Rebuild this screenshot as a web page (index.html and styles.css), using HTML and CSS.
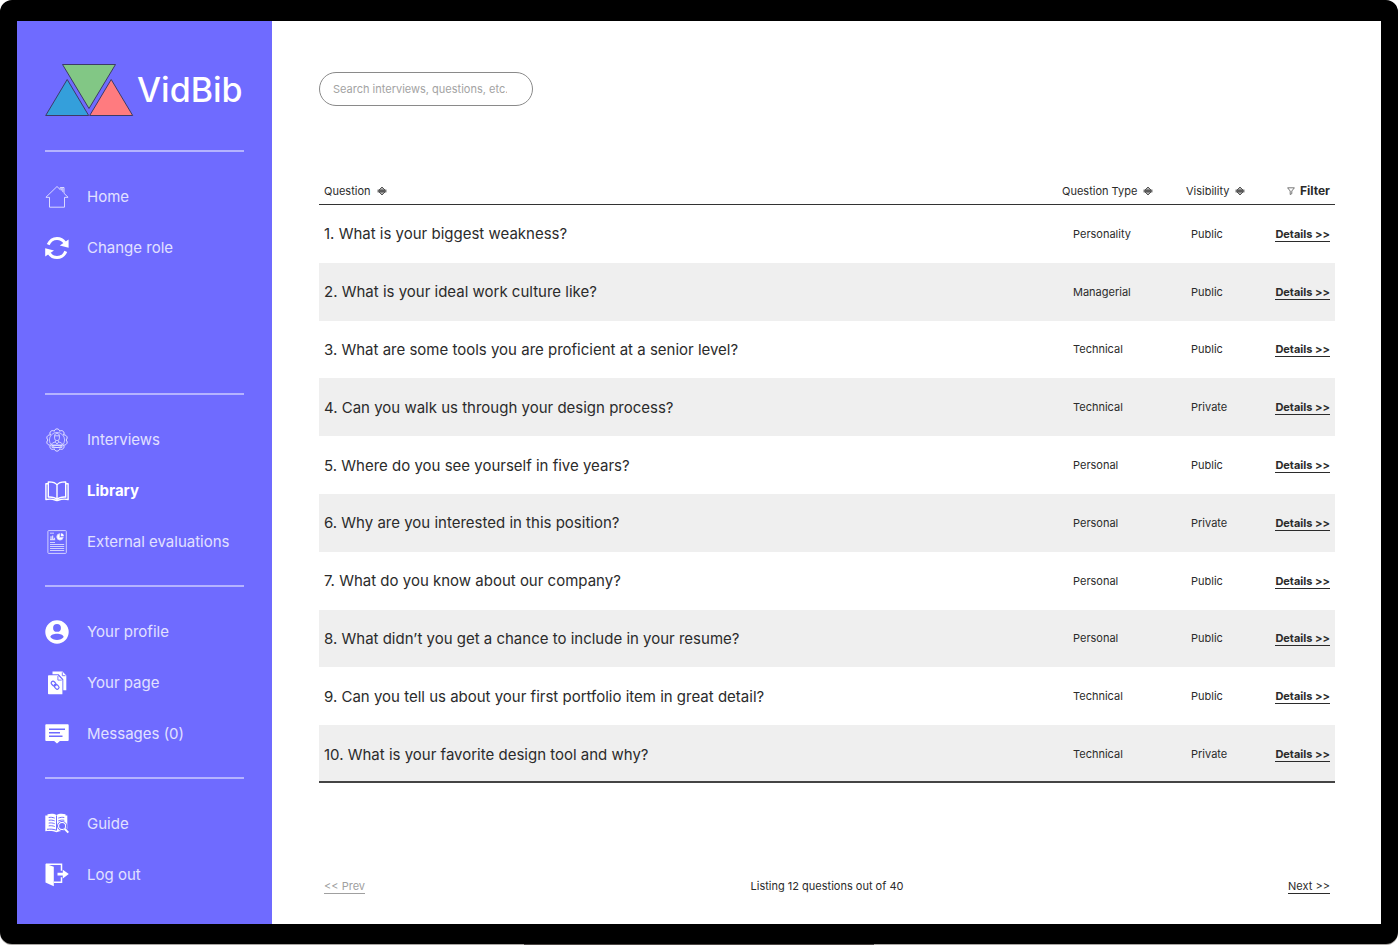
FILE: index.html
```html
<!DOCTYPE html>
<html lang="en">
<head>
<meta charset="utf-8">
<meta name="viewport" content="width=device-width, initial-scale=1">
<title>VidBib – Library</title>
<link rel="stylesheet" href="styles.css">
</head>
<body>
<svg class="sprite" aria-hidden="true">
  <symbol id="sort" viewBox="0 0 10 10"><path d="M5 1 8.300 4.300H1.700zM5 9 1.700 5.700h6.600z" fill="#b5b5b5" stroke="#4a4a4a" stroke-width=".9" stroke-linejoin="round"/><path d="M.8 4.200h8.400M.8 5.800h8.400" stroke="#4a4a4a" stroke-width=".9" stroke-linecap="round"/></symbol>
</svg>
<div class="device">
  <div class="screen">
    <aside class="sidebar">
      <a class="brand" href="#">
        <svg class="brand-mark" viewBox="1 0 90 54" aria-hidden="true">
          <g stroke="#3d3b66" stroke-width="1" stroke-linejoin="miter">
            <path d="M18.500 1.500h53L45 45.500z" fill="#82c785"/>
            <path d="M1.700 52.500 23.200 16.500l21.500 36z" fill="#349fdb"/>
            <path d="M45.700 52.500 67.200 16.500l21.500 36z" fill="#ff7b7f"/>
          </g>
        </svg>
        <span>VidBib</span>
      </a>
      <nav class="menu" aria-label="Main">
        <ul class="group group-first">
          <li><a href="#"><svg class="icon" viewBox="0 0 24 24" fill="none" stroke="#e6e5ff" stroke-width=".9"><path d="M.9 12.300 12 1.500l3.200 3.100V2.500H19v5.800l4.100 4-3.600.1v9.800H4.500v-9.800zM16.300 5.600V3.700h1.500v3.400"/></svg>Home</a></li>
          <li><a href="#"><svg class="icon" viewBox="0 0 24 24"><g fill="none" stroke="#fff" stroke-width="3"><path d="M3.200 8.700C5 4.500 8.300 2.400 12 2.400c3.300 0 6.200 1.700 7.800 4.200"/><path d="M20.800 15.300c-1.800 4.200-5.100 6.300-8.800 6.300-3.300 0-6.200-1.700-7.800-4.200"/></g><path d="M23.600 3.500v8.200L14.800 9.500zM.2 20.500v-8.200l8.800 2.200z" fill="#fff"/></svg>Change role</a></li>
        </ul>
        <ul class="group">
          <li><a href="#"><svg class="icon" viewBox="0 0 24 24" fill="none" stroke="#e9e8ff" stroke-width="1"><path d="M9.300 3.200C9.800.1 14.200.1 14.700 3.200 17.300 1.300 20.400 4.400 18.500 7 21.300 6.500 23.600 9.500 21 12c2.600 2.500.3 5.500-2.500 5 1.900 2.600-1.200 5.700-3.800 3.800-.5 3.100-4.900 3.100-5.400 0C6.700 22.700 3.600 19.600 5.500 17 2.700 17.500.4 14.500 3 12 .4 9.500 2.700 6.500 5.500 7 3.600 4.400 6.700 1.300 9.300 3.200z"/><circle cx="12" cy="12" r="7.600" stroke-width=".7"/><path d="M9.600 7.800c0-3.200 4.800-3.200 4.800 0v2.400c0 3.200-4.800 3.200-4.800 0zM9.600 7.800h4.800M10.500 12.500v1.300l-3 1.200c-.7.300-.8 1-.8 2h10.600c0-1-.1-1.700-.8-2l-3-1.200v-1.300M10.300 14l1.700 2 1.700-2M7 17.500h10v2H7z" stroke-width=".8"/></svg>Interviews</a></li>
          <li><a class="current" href="#" aria-current="page"><svg class="icon" viewBox="0 0 24 24" fill="none" stroke="#fff" stroke-width="1.400" stroke-linejoin="round"><path d="M12 6C10.500 3.600 7.300 2.800 3.300 2.900v15.200c4-.2 7 .7 8.700 2.500 1.700-1.800 4.700-2.700 8.700-2.500V2.900C16.700 2.800 13.500 3.600 12 6zM12 6v14.500M3.200 4.800H.9v15.700c3.600-.7 6.800-.4 9.300.5.400.8 3.200.8 3.600 0 2.500-.9 5.700-1.200 9.300-.5V4.800h-2.300"/></svg>Library</a></li>
          <li><a href="#"><svg class="icon" viewBox="0 0 24 24" fill="none" stroke="#dddcff" stroke-width=".9"><rect x="2.900" y=".6" width="18.400" height="22.800" rx=".8"/><path d="M5 3.200h4M5 12.500h5M5 14.500h14.200M5 16.500h14.200M5 18.500h14.200M5 20.500h14.200"/><path d="M6 9.700V6.300M7.600 9.700V5.500M9.400 9.700V7.800M5 9.700h5.200" stroke-width="1.300"/><path d="M14.500 3.700a3.200 3.200 0 1 0 3.700 3.700h-3.700z" fill="#fff"/><path d="M15.800 3.300v3h3.100a3.200 3.200 0 0 0-3.100-3z" fill="#fff" stroke="none"/></svg>External evaluations</a></li>
        </ul>
        <ul class="group">
          <li><a href="#"><svg class="icon" viewBox="0 0 24 24"><path fill="#fff" fill-rule="evenodd" d="M12 .3a11.700 11.700 0 1 0 0 23.400A11.700 11.700 0 0 0 12 .3zM12 4a3.900 3.900 0 1 1 0 7.800A3.900 3.900 0 0 1 12 4zM5.300 17c.9-4.200 12.500-4.200 13.400 0-2.800 4-10.600 4-13.400 0z"/></svg>Your profile</a></li>
          <li><a href="#"><svg class="icon" viewBox="0 0 24 24"><path fill="#fff" d="M7.500.5h10l3.800 3.900v14.800h-3V8.300l-4.600-5.100H7.500z"/><path fill="#fff" d="M3.800 4.200h9l4.600 4.900v14.200H3.800c-.5 0-.8-.3-.8-.8V5c0-.5.300-.8.800-.8z"/><path d="M17.300 1.300v3.400h3.200M12.900 5v4.100h3.800" fill="none" stroke="#6f6bff" stroke-width=".9"/><g fill="none" stroke="#6f6bff" stroke-width="1.200"><rect x="6" y="10.700" width="5" height="3.600" rx="1.800" transform="rotate(45 8.500 12.500)"/><rect x="9.200" y="14.100" width="5" height="3.600" rx="1.800" transform="rotate(45 11.700 15.900)"/><path d="m9.200 13.200 2 2"/></g></svg>Your page</a></li>
          <li><a href="#"><svg class="icon" viewBox="0 0 24 24"><path fill="#fff" d="M1.500 2.300h21c.8 0 1.200.4 1.200 1.200v14.300c0 .8-.4 1.200-1.200 1.200h-7.600L12 21.500 9.100 19H1.500c-.8 0-1.200-.4-1.200-1.200V3.500c0-.8.400-1.200 1.200-1.200z"/><path d="M4 7.200h16M4 10.700h11M4 14.200h13.500" stroke="#6f6bff" stroke-width="1.400"/></svg>Messages (0)</a></li>
        </ul>
        <ul class="group">
          <li><a href="#"><svg class="icon" viewBox="0 0 24 24"><path fill="#fff" d="M2.500 2.200C6 1.300 9.500 1.600 11.500 3c2-1.400 5.500-1.700 9-.8v1.300h1.800v15.800c-4-.6-8-.3-10.800 1C8.700 19 4.500 18.700.3 19.300V3.500h2.200z"/><g fill="none" stroke="#6f6bff" stroke-width="1"><path d="M11.500 3.500v15M3.700 5.500c2-.4 4-.2 6 .6M3.700 8.300c2-.4 4-.2 6 .6M3.700 11.100c2-.4 4-.2 6 .6M3.700 13.900c2-.4 4-.2 6 .6M2 17.300c3.500-.4 6.500-.2 9 .8M13.300 6.100c2-.8 4-1 6-.6M13.300 8.900c2-.8 4-1 6-.6"/></g><circle cx="17.100" cy="14" r="4.600" fill="#fff" stroke="#6f6bff" stroke-width="1"/><circle cx="17.100" cy="14" r="3" fill="#6f6bff"/><path d="m19.700 16.700 3.800 4" stroke="#6f6bff" stroke-width="3.600"/><path d="m19.700 16.700 3.600 3.900" stroke="#fff" stroke-width="2"/></svg>Guide</a></li>
          <li><a href="#"><svg class="icon" viewBox="0 0 24 24"><path fill="#fff" d="m.5.800 8.300 3v19.400L.5 19.600z"/><path d="M1 1.300h15.500v6.400M16.500 14.300v5H9" fill="none" stroke="#fff" stroke-width="1.500"/><path d="M12.500 9.700h5.300V6.800l6 4.300-6 4.300v-2.900h-5.300z" fill="#fff"/></svg>Log out</a></li>
        </ul>
      </nav>
    </aside>
    <main class="content">
      <form class="search" role="search">
        <input class="search-box" type="search" aria-label="Search" placeholder="Search interviews, questions, etc.">
      </form>
      <div class="listing">
        <table class="questions">
          <thead>
            <tr>
              <th class="col-question" scope="col"><button type="button">Question <svg class="sort"><use href="#sort"/></svg></button></th>
              <th class="col-type" scope="col"><button type="button">Question Type <svg class="sort"><use href="#sort"/></svg></button></th>
              <th class="col-visibility" scope="col"><button type="button">Visibility <svg class="sort"><use href="#sort"/></svg></button></th>
              <th class="col-action" scope="col"><button class="filter" type="button"><svg class="funnel" viewBox="0 0 8 8" fill="none" stroke="#555" stroke-width=".8"><path d="M.6.800h6.800L4.800 4v2.700l-1.600.8V4z"/></svg> Filter</button></th>
            </tr>
          </thead>
          <tbody>
            <tr><td>1. What is your biggest weakness?</td><td class="type">Personality</td><td class="vis">Public</td><td class="act"><a href="#">Details &gt;&gt;</a></td></tr>
            <tr><td>2. What is your ideal work culture like?</td><td class="type">Managerial</td><td class="vis">Public</td><td class="act"><a href="#">Details &gt;&gt;</a></td></tr>
            <tr><td>3. What are some tools you are proficient at a senior level?</td><td class="type">Technical</td><td class="vis">Public</td><td class="act"><a href="#">Details &gt;&gt;</a></td></tr>
            <tr><td>4. Can you walk us through your design process?</td><td class="type">Technical</td><td class="vis">Private</td><td class="act"><a href="#">Details &gt;&gt;</a></td></tr>
            <tr><td>5. Where do you see yourself in five years?</td><td class="type">Personal</td><td class="vis">Public</td><td class="act"><a href="#">Details &gt;&gt;</a></td></tr>
            <tr><td>6. Why are you interested in this position?</td><td class="type">Personal</td><td class="vis">Private</td><td class="act"><a href="#">Details &gt;&gt;</a></td></tr>
            <tr><td>7. What do you know about our company?</td><td class="type">Personal</td><td class="vis">Public</td><td class="act"><a href="#">Details &gt;&gt;</a></td></tr>
            <tr><td>8. What didn’t you get a chance to include in your resume?</td><td class="type">Personal</td><td class="vis">Public</td><td class="act"><a href="#">Details &gt;&gt;</a></td></tr>
            <tr><td>9. Can you tell us about your first portfolio item in great detail?</td><td class="type">Technical</td><td class="vis">Public</td><td class="act"><a href="#">Details &gt;&gt;</a></td></tr>
            <tr><td>10. What is your favorite design tool and why?</td><td class="type">Technical</td><td class="vis">Private</td><td class="act"><a href="#">Details &gt;&gt;</a></td></tr>
          </tbody>
        </table>
      </div>
      <nav class="pager" aria-label="Pages">
        <a class="prev" href="#">&lt;&lt; Prev</a>
        <span>Listing 12 questions out of 40</span>
        <a class="next" href="#">Next &gt;&gt;</a>
      </nav>
    </main>
  </div>
  <div class="lip"></div>
</div>
</body>
</html>
```
FILE: styles.css
```css
* { box-sizing: border-box; }

body {
  margin: 0;
  background: #fff;
  color: #2b2b2b;
  font-family: Inter, "Liberation Sans", sans-serif;
  font-size: 11px;
}

a { color: inherit; text-decoration: none; }
ul { list-style: none; margin: 0; padding: 0; }
.sprite { display: none; }

.device {
  display: flex;
  flex-direction: column;
  align-items: center;
  min-height: 100vh;
  padding-bottom: 1px;
}

.screen {
  flex: 1;
  display: flex;
  width: 100%;
  border: solid #000;
  border-width: 21px 17px 20px;
  border-radius: 12px;
  background: #fff;
  box-shadow: 0 1px 0 #a8a5a2;
}

.lip {
  position: relative;
  width: 25%;
  height: 1px;
  background: #4a4543;
}

.sidebar {
  flex: none;
  display: flex;
  flex-direction: column;
  width: 255px;
  padding: 42px 28px 6px;
  background: #6f6bff;
  color: #e2e1ff;
}

.brand {
  display: flex;
  align-items: center;
  gap: 2px;
  margin-bottom: 33px;
  color: #fff;
  font-size: 34px;
  font-weight: 500;
  line-height: 54px;
}
.brand-mark { flex: none; width: 90px; height: 54px; }

.menu { flex: 1; display: flex; flex-direction: column; }
.group {
  display: flex;
  flex-direction: column;
  gap: 27px;
  padding: 33px 0 31px;
  border-top: 2px solid #b5b3ff;
}
.group-first { flex: 1; }
.group a {
  display: flex;
  align-items: center;
  gap: 18px;
  font-size: 15px;
  line-height: 24px;
}
.group .current { color: #fff; font-weight: 700; }
.icon { flex: none; width: 24px; height: 24px; }

.content {
  flex: 1;
  display: flex;
  flex-direction: column;
  padding: 51px 46px 30px 47px;
}

.search { margin: 0 0 72px; }
.search-box {
  display: block;
  width: 214px;
  height: 34px;
  padding: 0 13px;
  border: 1px solid #8a8a8a;
  border-radius: 17px;
  background: #fff;
  font: inherit;
}
.search-box::placeholder { color: #a3a3a3; opacity: 1; }

.listing { flex: 1; display: flex; margin-bottom: 96px; }
.questions {
  width: 100%;
  border-collapse: separate;
  border-spacing: 0;
  table-layout: fixed;
}
th {
  height: 27px;
  padding: 0;
  border-bottom: 1px solid #333;
  text-align: left;
  font-weight: 400;
}
th button {
  display: flex;
  align-items: center;
  gap: 6px;
  padding: 0;
  border: 0;
  background: none;
  color: inherit;
  font: inherit;
  line-height: 16px;
}
.col-question { padding-left: 5px; }
.col-type { width: 124px; }
.col-visibility { width: 87px; }
.col-action { width: 62px; }
.sort { width: 10px; height: 10px; }
.funnel { width: 8px; height: 8px; }
.filter { gap: 5px; margin: 0 5px 0 auto; font-size: 12px; font-weight: 700; }

td { padding: 0 0 0 5px; font-size: 15px; }
tbody tr:nth-child(even) { background: #efefef; }
tbody tr:last-child { box-shadow: inset 0 -2px 0 #444; }
td.type { padding-left: 11px; font-size: 11px; }
td.vis { font-size: 11px; }
td.act { padding: 0 5px 0 0; text-align: right; font-size: 11px; font-weight: 700; white-space: nowrap; }
td.act a, .prev, .next { border-bottom: 1px solid; }

.pager {
  display: grid;
  grid-template-columns: 1fr auto 1fr;
  padding: 0 5px;
  line-height: 14px;
}
.prev { justify-self: start; color: #a0a0a0; }
.next { justify-self: end; }
```
